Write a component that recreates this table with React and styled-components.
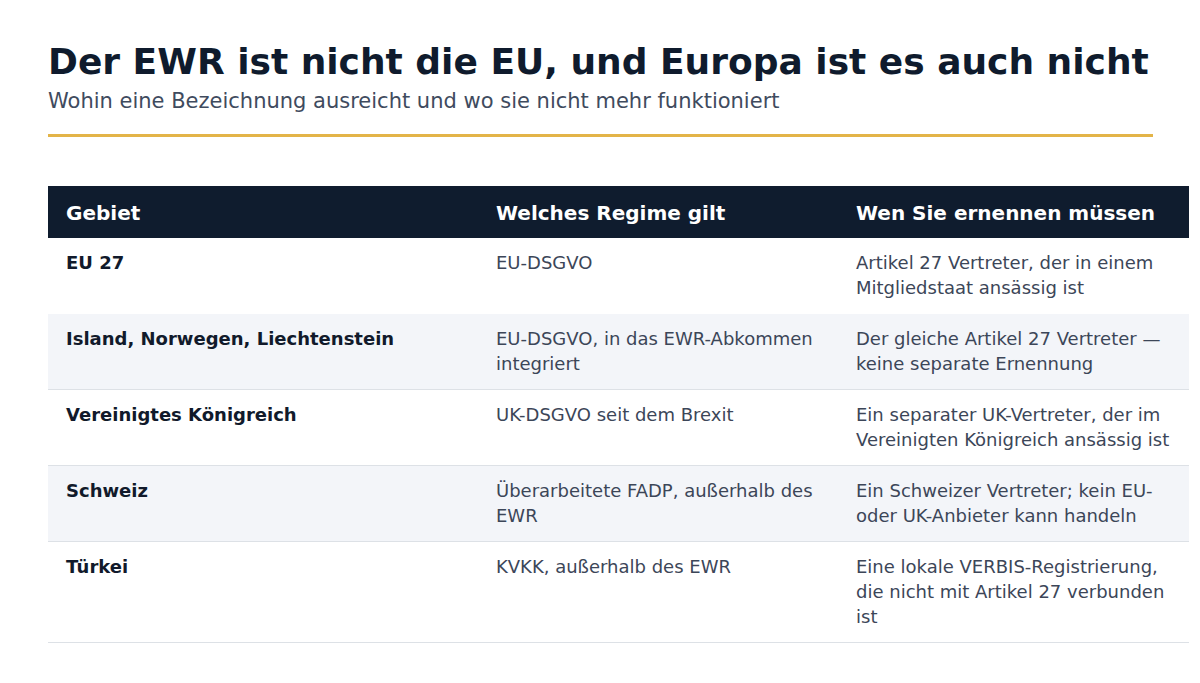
import React from 'react'
import styled, { createGlobalStyle } from 'styled-components'

const Global = createGlobalStyle`
  html, body { margin:0; padding:0; background:#ffffff; }
  body { font-family:"DejaVu Sans", Verdana, sans-serif; }
`

const rows = [
  { area: 'EU 27', regime: 'EU-DSGVO', who: 'Artikel 27 Vertreter, der in einem Mitgliedstaat ansässig ist' },
  { area: 'Island, Norwegen, Liechtenstein', regime: 'EU-DSGVO, in das EWR-Abkommen integriert', who: 'Der gleiche Artikel 27 Vertreter — keine separate Ernennung' },
  { area: 'Vereinigtes Königreich', regime: 'UK-DSGVO seit dem Brexit', who: 'Ein separater UK-Vertreter, der im Vereinigten Königreich ansässig ist' },
  { area: 'Schweiz', regime: 'Überarbeitete FADP, außerhalb des EWR', who: 'Ein Schweizer Vertreter; kein EU- oder UK-Anbieter kann handeln' },
  { area: 'Türkei', regime: 'KVKK, außerhalb des EWR', who: 'Eine lokale VERBIS-Registrierung, die nicht mit Artikel 27 verbunden ist' },
]

const App = () => {
  return (
    <Page>
      <Global />
      <Title>Der EWR ist nicht die EU, und Europa ist es auch nicht</Title>
      <Subtitle>Wohin eine Bezeichnung ausreicht und wo sie nicht mehr funktioniert</Subtitle>
      <Rule />
      <Table>
        <colgroup>
          <col style={{ width: 430 }} />
          <col style={{ width: 360 }} />
          <col style={{ width: 351 }} />
        </colgroup>
        <thead>
          <tr>
            <Th>Gebiet</Th>
            <Th>Welches Regime gilt</Th>
            <Th>Wen Sie ernennen müssen</Th>
          </tr>
        </thead>
        <tbody>
          {rows.map((r, i) => (
            <Row key={i} $alt={i % 2 === 1} $border={i > 0}>
              <Td $strong>{r.area}</Td>
              <Td>{r.regime}</Td>
              <Td>{r.who}</Td>
            </Row>
          ))}
        </tbody>
      </Table>
    </Page>
  )
}

const Page = styled.div`
  width:1200px;
  height:683px;
  box-sizing:border-box;
  padding:40px 47px 0 48px;
  overflow:hidden;
`

const Title = styled.h1`
  margin:0;
  font-size:36px;
  font-weight:700;
  line-height:44px;
  color:#0f1b2d;
  white-space:nowrap;
`

const Subtitle = styled.p`
  margin:4px 0 0;
  font-size:21px;
  line-height:26px;
  color:#3f4b5e;
  white-space:nowrap;
`

const Rule = styled.div`
  height:3px;
  background:#e3b448;
  margin-top:20px;
`

const Table = styled.table`
  margin-top:49px;
  border-collapse:collapse;
  table-layout:fixed;
  width:1141px;
`

const Th = styled.th`
  background:#0f1c2e;
  color:#ffffff;
  text-align:left;
  font-size:20px;
  font-weight:700;
  line-height:24px;
  padding:15px 18px 13px;
  white-space:nowrap;
`

const Row = styled.tr`
  background:${p => (p.$alt ? '#f3f5f9' : '#ffffff')};
  border-bottom:1px solid ${p => (p.$border ? '#dde1e6' : 'transparent')};
`

const Td = styled.td`
  vertical-align:top;
  padding:12px 18px 13px;
  font-size:18px;
  line-height:25px;
  color:${p => (p.$strong ? '#111a2b' : '#3c4658')};
  font-weight:${p => (p.$strong ? 700 : 400)};
`

export default App
